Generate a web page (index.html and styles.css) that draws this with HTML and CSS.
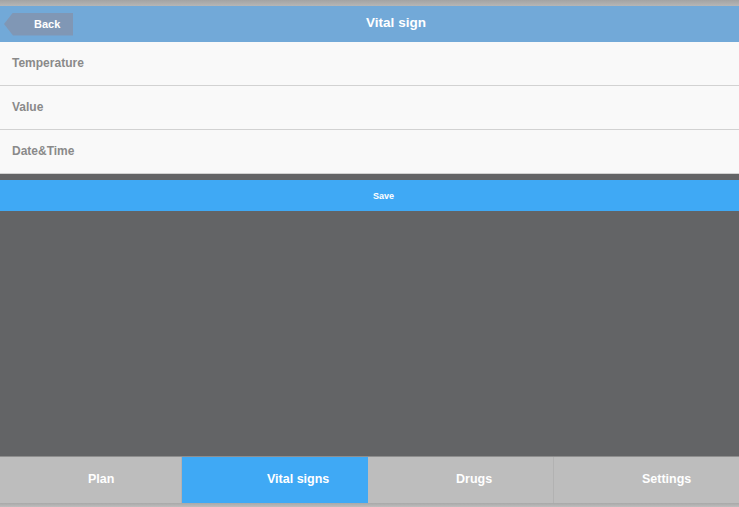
FILE: index.html
```html
<!DOCTYPE html>
<html>
<head>
<meta charset="utf-8">
<link rel="stylesheet" href="styles.css">
</head>
<body>
<div class="app">
  <div class="top-shade"></div>
  <header class="header">
    <div class="back">Back</div>
    <div class="title">Vital sign</div>
  </header>
  <div class="form">
    <div class="row">Temperature</div>
    <div class="row">Value</div>
    <div class="row">Date&amp;Time</div>
  </div>
  <div class="gap"></div>
  <div class="save">Save</div>
  <div class="fill"></div>
  <nav class="tabs">
    <div class="tab">Plan</div>
    <div class="tab active">Vital signs</div>
    <div class="tab">Drugs</div>
    <div class="tab last">Settings</div>
  </nav>
  <div class="bottom-shade"></div>
</div>
</body>
</html>
```
FILE: styles.css
```css
html, body {
  margin: 0;
  padding: 0;
}
body {
  font-family: "Liberation Sans", Arial, sans-serif;
  background: #b0b0b0;
}
.app {
  width: 739px;
  height: 507px;
  display: flex;
  flex-direction: column;
  overflow: hidden;
}
.top-shade {
  height: 6px;
  background: linear-gradient(to bottom, #a3a3a3, #b6b6b6);
}
.header {
  height: 36px;
  background: #72a9d8;
  display: flex;
  align-items: center;
}
.back {
  margin-left: 4px;
  width: 69px;
  height: 23px;
  box-sizing: border-box;
  padding-left: 30px;
  background: #8097b5;
  color: #fff;
  font-weight: bold;
  font-size: 11px;
  line-height: 23px;
  clip-path: polygon(9px 0, 100% 0, 100% 100%, 9px 100%, 0 50%);
}
.title {
  flex: 1;
  text-align: center;
  padding-right: 20px;
  color: #fff;
  font-weight: bold;
  font-size: 13.5px;
  margin-top: -4px;
}
.form {
  background: #f9f9f9;
}
.row {
  height: 42px;
  padding-bottom: 1px;
  border-bottom: 1px solid #d2d2d2;
  display: flex;
  align-items: center;
  padding-left: 12px;
  color: #8a8a8a;
  font-weight: bold;
  font-size: 12px;
}
.gap {
  height: 6px;
  background: #636466;
}
.save {
  height: 31px;
  background: #3fa9f5;
  color: #fff;
  font-weight: bold;
  font-size: 9px;
  display: flex;
  align-items: center;
  justify-content: center;
  padding-left: 28px;
}
.fill {
  flex: 1;
  background: #636466;
}
.tabs {
  height: 47px;
  display: grid;
  grid-template-columns: 182px 186px 186px 185px;
  background: #bdbdbd;
  border-top: 1px solid #8e8e8e;
  box-sizing: border-box;
}
.tab {
  display: flex;
  align-items: center;
  padding-left: 88px;
  padding-bottom: 2px;
  color: #fff;
  font-weight: bold;
  font-size: 12.5px;
  border-right: 1px solid #b2b2b2;
}
.tab.active {
  background: #3fa9f5;
  padding-left: 85px;
  border-right: none;
}
.tab.last {
  border-right: none;
}
.bottom-shade {
  height: 4px;
  background: linear-gradient(to bottom, #a8a8a8, #bdbdbd);
}
```
